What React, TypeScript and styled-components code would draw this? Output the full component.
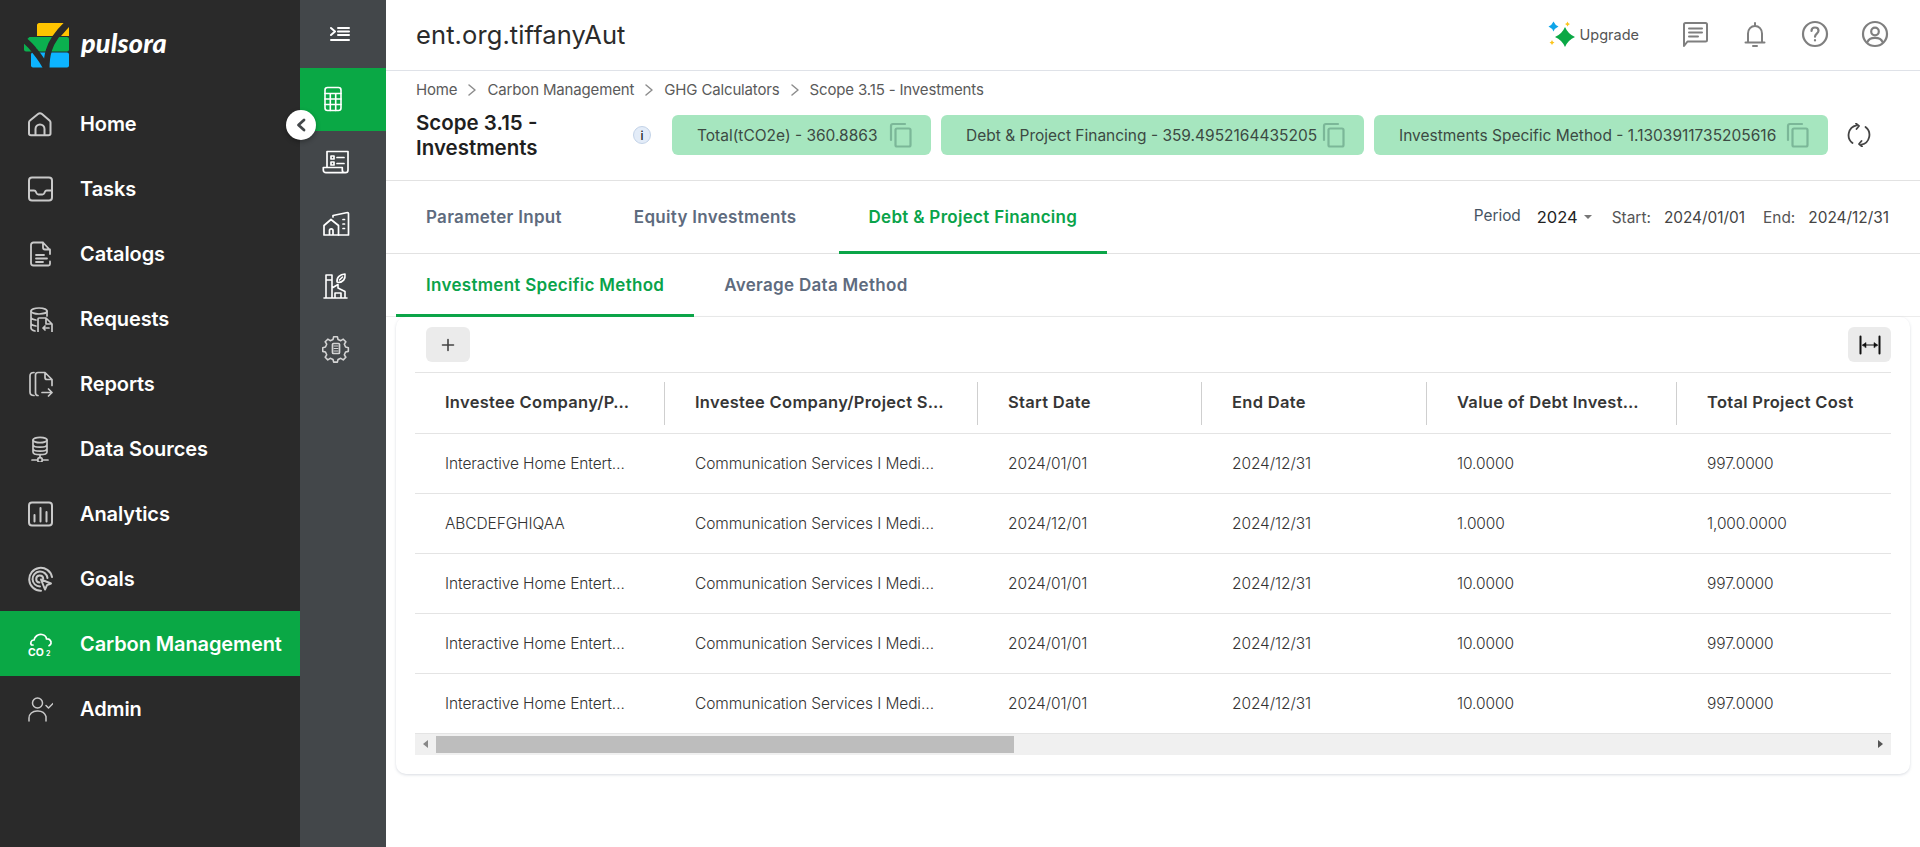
import React from "react";
import styled, { createGlobalStyle } from "styled-components";

const GREEN = "#0aa845";
const FONT = `Inter, "Noto Sans", "Liberation Sans", sans-serif`;

const Global = createGlobalStyle`
  html, body { margin: 0; padding: 0; height: 100%; background: #fff; overflow: hidden; }
  * { box-sizing: border-box; }
  body { font-family: ${FONT}; color: #333; }
`;

const Page = styled.div`
  position: relative;
  display: flex;
  width: 1920px;
  height: 847px;
  overflow: hidden;
`;

/* ---------- left sidebar ---------- */
const Sidebar = styled.aside`
  flex: 0 0 300px;
  background: #2a2a2a;
  display: flex;
  flex-direction: column;
`;
const Brand = styled.div`
  height: 91px;
  padding: 22px 0 0 24px;
  display: flex;
  align-items: flex-start;
  gap: 11px;
`;
const BrandName = styled.span`
  font-family: Lato, "Open Sans", sans-serif;
  font-style: italic;
  font-weight: 900;
  font-size: 27px;
  line-height: 1;
  color: #fff;
  margin-top: 7px;
  letter-spacing: 0.2px;
`;
const NavList = styled.nav`
  display: flex;
  flex-direction: column;
`;
const NavRow = styled.div<{ $active?: boolean }>`
  height: 65px;
  display: flex;
  align-items: center;
  gap: 27px;
  padding-left: 27px;
  background: ${(p) => (p.$active ? GREEN : "transparent")};
  color: ${(p) => (p.$active ? "#fff" : "#c9c9c9")};
`;
const NavLabel = styled.span`
  font-size: 20px;
  font-weight: 600;
  color: #fff;
  letter-spacing: -0.1px;
  white-space: nowrap;
`;
const Svg = styled.svg`
  display: block;
  flex: none;
`;

/* ---------- icon rail ---------- */
const Rail = styled.div`
  flex: 0 0 86px;
  background: #43474a;
  display: flex;
  flex-direction: column;
  color: #fff;
`;
const RailToggle = styled.div`
  height: 68px;
  padding-left: 30px;
  display: flex;
  align-items: center;
`;
const RailItem = styled.div<{ $active?: boolean; $muted?: boolean }>`
  height: 62.5px;
  padding-left: 22px;
  display: flex;
  align-items: center;
  background: ${(p) => (p.$active ? GREEN : "transparent")};
  color: ${(p) => (p.$muted ? "#d4d4d4" : "#fff")};
`;
const CollapseBtn = styled.div`
  position: absolute;
  left: 286px;
  top: 110px;
  width: 30px;
  height: 30px;
  border-radius: 50%;
  background: #fff;
  box-shadow: 0 2px 5px rgba(0, 0, 0, 0.3);
  display: flex;
  align-items: center;
  justify-content: center;
  color: #43474a;
`;

/* ---------- main ---------- */
const Main = styled.main`
  flex: 1;
  min-width: 0;
  display: flex;
  flex-direction: column;
`;
const TopBar = styled.header`
  height: 71px;
  flex: none;
  border-bottom: 1px solid #dfe2e8;
  display: flex;
  align-items: center;
  justify-content: space-between;
  padding: 0 30px 2px 30px;
`;
const OrgName = styled.div`
  font-size: 25.5px;
  font-weight: 400;
  color: #2b2b2b;
  letter-spacing: 0.1px;
`;
const TopActions = styled.div`
  display: flex;
  align-items: center;
  color: #7f7f7f;
`;
const UpgradeLink = styled.div`
  display: flex;
  align-items: center;
  gap: 5px;
  font-size: 14.5px;
  color: #555;
  margin-right: 26px;
`;
const TopIcon = styled.div`
  width: 60px;
  display: flex;
  justify-content: center;
  &:last-child { width: 30px; margin-left: 15px; }
`;

const Crumbs = styled.div`
  height: 37px;
  flex: none;
  display: flex;
  align-items: center;
  padding-left: 30px;
  font-size: 15px;
  color: #5a5a5a;
  letter-spacing: -0.15px;
`;
const CrumbSep = styled.span`
  display: flex;
  margin: 0 8px;
  color: #8d8d8d;
`;
const SummaryRow = styled.div`
  height: 73px;
  flex: none;
  border-bottom: 1px solid #e2e2e2;
  display: flex;
  align-items: flex-start;
  padding: 2px 0 0 30px;
`;
const PageTitle = styled.h1`
  margin: 0;
  width: 217px;
  font-size: 20.5px;
  line-height: 25px;
  font-weight: 600;
  color: #1f1f1f;
`;
const InfoDot = styled.div`
  flex: none;
  width: 18px;
  height: 18px;
  margin: 16px 21px 0 0;
  border-radius: 50%;
  background: #e3ecf8;
  border: 1px solid #c3d3e8;
  font-size: 12px;
  font-weight: 500;
  color: #222;
  display: flex;
  align-items: center;
  justify-content: center;
`;
const Pills = styled.div`
  display: flex;
  gap: 10px;
  margin-top: 5px;
`;
const Pill = styled.div<{ $w: number }>`
  width: ${(p) => p.$w}px;
  height: 40px;
  background: #a6e6bf;
  border-radius: 6px;
  display: flex;
  align-items: center;
  justify-content: space-between;
  padding: 0 17px 0 25px;
  font-size: 15.5px;
  color: #3c4a43;
  white-space: nowrap;
  > svg { color: #7bb798; }
`;
const Refresh = styled.div`
  margin: 13px 0 0 19px;
  color: #444;
`;

const TabBar = styled.div`
  height: 73px;
  flex: none;
  border-bottom: 1px solid #e2e2e2;
  display: flex;
  justify-content: space-between;
  padding-left: 10px;
`;
const TabGroup = styled.div<{ $gap: number }>`
  display: flex;
  gap: ${(p) => p.$gap}px;
`;
const Tab = styled.div<{ $active?: boolean }>`
  padding: 1px 30px 0;
  display: flex;
  align-items: center;
  font-size: 17px;
  font-weight: 600;
  letter-spacing: 0.3px;
  white-space: nowrap;
  color: ${(p) => (p.$active ? "#0aa34a" : "#5e6b7e")};
  border-bottom: 3px solid ${(p) => (p.$active ? "#0ba548" : "transparent")};
  margin-bottom: -1px;
`;
const PeriodBar = styled.div`
  display: flex;
  align-items: center;
  padding-right: 31px;
  font-size: 15.4px;
  color: #444;
`;
const PeriodLabel = styled.span`
  color: #465463;
  margin: -3px 16px 0 0;
`;
const PeriodValue = styled.span`
  font-size: 16.5px;
  color: #222;
  margin-right: 6px;
`;
const Caret = styled.span`
  width: 0;
  height: 0;
  border-left: 4px solid transparent;
  border-right: 4px solid transparent;
  border-top: 4px solid #777;
  margin-right: 20px;
`;
const DateLabel = styled.span`
  color: #555;
  margin-right: 13px;
`;
const DateValue = styled.span<{ $mr?: number }>`
  color: #444;
  margin-right: ${(p) => p.$mr ?? 0}px;
`;
const SubTabBar = styled(TabBar)`
  height: 63px;
  justify-content: flex-start;
  border-bottom-color: #ececec;
`;

const Card = styled.section`
  flex: none;
  height: 457px;
  margin: 0 10px;
  background: #fff;
  border-radius: 10px;
  box-shadow: 0 1px 3px rgba(120, 130, 150, 0.28);
  padding: 10px 19px 0;
  display: flex;
  flex-direction: column;
`;
const Toolbar = styled.div`
  height: 45px;
  flex: none;
  display: flex;
  justify-content: space-between;
  align-items: flex-start;
  padding-left: 11px;
`;
const ToolBtn = styled.div<{ $w: number; $dark?: boolean }>`
  width: ${(p) => p.$w}px;
  height: 35px;
  border-radius: 6px;
  background: #ebebeb;
  color: ${(p) => (p.$dark ? "#111" : "#444")};
  display: flex;
  align-items: center;
  justify-content: center;
`;
const TableBox = styled.div`
  border-top: 1px solid #e4e4e4;
  overflow: hidden;
`;
const Row = styled.div<{ $head?: boolean }>`
  display: grid;
  grid-template-columns: 250px 313px 224px 225px 250px 214px;
  align-items: center;
  height: ${(p) => (p.$head ? 61 : 60)}px;
  border-bottom: 1px solid #e4e4e4;
`;
const HeadCell = styled.div`
  height: 43px;
  padding: 0 0 2px 30px;
  display: flex;
  align-items: center;
  border-right: 1px solid #cfcfcf;
  font-size: 16.5px;
  font-weight: 600;
  color: #363636;
  white-space: nowrap;
  letter-spacing: 0.3px;
  &:last-child { border-right: none; }
`;
const Cell = styled.div`
  padding-left: 30px;
  font-size: 15.5px;
  font-weight: 300;
  color: #333;
  white-space: nowrap;
  letter-spacing: -0.1px;
`;
const ScrollTrack = styled.div`
  height: 21px;
  background: #f0f0f0;
  display: flex;
  align-items: center;
  position: relative;
`;
const ScrollThumb = styled.div`
  position: absolute;
  left: 21px;
  top: 2px;
  width: 578px;
  height: 17px;
  background: #bdbdbd;
`;
const Arrow = styled.span<{ $dir: "left" | "right" }>`
  position: absolute;
  top: 6px;
  ${(p) => (p.$dir === "left" ? "left: 8px;" : "right: 8px;")}
  width: 0;
  height: 0;
  border-top: 4.5px solid transparent;
  border-bottom: 4.5px solid transparent;
  ${(p) => (p.$dir === "left" ? "border-right: 5px solid #888;" : "border-left: 5px solid #555;")}
`;

/* ---------- drawings ---------- */
type IP = { s?: number; h?: number; vb?: string; w?: number; children: React.ReactNode };
const Ico = ({ s = 26, h, vb, w = 1.7, children }: IP) => (
  <Svg
    width={s}
    height={h ?? s}
    viewBox={vb ?? `0 0 ${s} ${h ?? s}`}
    fill="none"
    stroke="currentColor"
    strokeWidth={w}
    strokeLinecap="round"
    strokeLinejoin="round"
  >
    {children}
  </Svg>
);

const Logo = () => (
  <Svg width="46" height="47" viewBox="0 0 46 47">
    <path d="M15 1h25c2 0 2 1 1 3l-8 10H13V3c0-1 1-2 2-2z" fill="#ffc400" />
    <path d="M37 14l8-9v9z" fill="#ffc400" />
    <rect x="0" y="15" width="45" height="14.5" rx="2" fill="#0bb04f" />
    <rect x="7" y="30.5" width="38" height="15" rx="2" fill="#0db4ff" />
    <path d="M0 14.500H6L0 20z" fill="#2a2a2a" />
    <path d="M-1 17C4 21 8 25 10 28C14 33 19 39 22 46" stroke="#2a2a2a" strokeWidth="6" fill="none" />
    <path d="M46 -1C36 8 28 18 25 28C23 34 22.500 41 22.500 47" stroke="#2a2a2a" strokeWidth="6" fill="none" />
  </Svg>
);

const navItems: [string, React.ReactNode][] = [
  ["Home", <Ico key="a" w={2}><path d="M2 22.500V11.500c0-.8.3-1.500 1-2l8-6.500c1.200-1 2.800-1 4 0l7.500 6.500c.6.5 1 1.200 1 2v11c0 1-.8 1.700-2 1.700H4c-1.200 0-2-.7-2-1.700z" /><path d="M8.500 24v-6a4.500 4.500 0 0 1 9 0v6" /></Ico>],
  ["Tasks", <Ico key="b" w={2}><rect x="2" y="1.500" width="23" height="23" rx="3" /><path d="M2 14.500h5c1 0 1.600.5 2 1.500l.4 1c.4 1 1.100 1.500 2 1.500h4c.9 0 1.600-.5 2-1.500l.4-1c.4-1 1-1.500 2-1.500H25" /></Ico>],
  ["Catalogs", <Ico key="c" w={1.800}><path d="M23 20.500V23c0 1-.6 1.500-1.500 1.500M21 24.500H6.500C5 24.500 4 23.500 4 22V4c0-1.500 1-2.500 2.500-2.500h9.500L23 9v4M16 1.500V6.500c0 1.200.8 2 2 2h5" /><path d="M9 14h8M9 17.500h11M9 21h7" /></Ico>],
  ["Requests", <Ico key="d"><ellipse cx="12" cy="5" rx="8" ry="3" /><path d="M4 5v17c0 1.500 2 2.500 4 3M20 5v5M4 11c0 1.500 2 2.500 5 3M4 17c0 1.500 2 2.500 5 3" /><path d="M11 13c0-.6.4-1 1-1h7l6 6v8c0 .6-.4 1-1 1H12c-.6 0-1-.4-1-1zM19 12v6h6M22 22h-6M18 20l-2 2 2 2" /></Ico>],
  ["Reports", <Ico key="e"><path d="M7 1.500C4 1.500 3 3 3 5v16c0 2 1 3.500 4 3.500" /><path d="M11 24.500c-1.500 0-2.500-1-2.500-2.500V4c0-1.500 1-2.500 2.500-2.500h7l7 7v6M18 1.500v5c0 1.200.8 2 2 2h5" /><path d="M15 21.500h10M21.500 18l3.500 3.500-3.500 3.500" /></Ico>],
  ["Data Sources", <Ico key="f"><ellipse cx="13" cy="4" rx="7" ry="2.700" /><path d="M6 4v12c0 1.500 3 2.700 7 2.700s7-1.200 7-2.700V4M6 8.500c0 1.500 3 2.700 7 2.700s7-1.200 7-2.700M6 12.500c0 1.500 3 2.700 7 2.700s7-1.200 7-2.700" /><path d="M13 19v2.500M5 24h5.500M15.500 24H21" /><circle cx="13" cy="24" r="2.300" /></Ico>],
  ["Analytics", <Ico key="g" w={2}><rect x="2" y="1.500" width="23" height="23" rx="3" /><path d="M7.500 14v6.500M13.500 7v13.500M19.500 11v9.500" /></Ico>],
  ["Goals", <Ico key="h" w={2}><path d="M14 24.800A11.500 11.500 0 1 1 25 11" /><path d="M13 20.500A7.500 7.500 0 1 1 20.500 12" /><path d="M12.500 16.500a3.500 3.500 0 1 1 3.700-3.800" /><path d="M14 13.500l10 4-4 1.700-2 4.300z" /></Ico>],
  ["Carbon Management", <Ico key="i"><path d="M6 14H4.500C3 12 4 9 7 9c.5-3 4-6.500 8-5.500 3 .7 4.500 3 4.500 4.500 3-.3 5 2 4.500 4.500-.2 1-1 1.700-2 2.200" /><text x="1" y="24.500" fontFamily="Inter, sans-serif" fontWeight="700" fontSize="10.500" fill="currentColor" stroke="none">CO</text><text x="19" y="25" fontFamily="Inter, sans-serif" fontWeight="700" fontSize="7" fill="currentColor" stroke="none">2</text></Ico>],
  ["Admin", <Ico key="j" w={1.500}><circle cx="10.500" cy="7" r="5" /><path d="M2 25v-3c0-4 3.500-7 8-7h1c4 0 7 2.500 8 5.500V25" /><path d="M19 9.500l2.500 2.500 4.500-4.500" /></Ico>],
];

const railIcons: React.ReactNode[] = [
  <Ico key="a" s={26} w={1.600}><rect x="3" y="1.500" width="16" height="23" rx="2.500" /><path d="M3 7.500h16M3 13h16M3 18.500h16M8.300 7.500v17M13.700 7.500v17" /></Ico>,
  <Ico key="b" s={28} w={1.700}><path d="M5 19V3.500h21V22c0 1.600-1 2.700-2.600 2.700H4c-1.600 0-2.700-1-2.700-2.700v-2.500h19V22c0 1.500 1 2.700 2.600 2.700" /><path d="M9 8h3v3H9zM9 14h3v3H9zM15 9.500h7M15 15.500h7" /></Ico>,
  <Ico key="c" s={28} w={1.700}><path d="M2 25V15.500L9 9.500l7.500 6V25zM7.500 25v-4.500c0-1 .8-1.700 1.700-1.700s1.800.7 1.800 1.700V25" /><path d="M11 7V5.500l14.500-3c.6 0 1 .4 1 1V25H16.500" /><path d="M21 9.500h1.500M21 14h1.500M21 18.500h1.500" /></Ico>,
  <Ico key="d" s={28} w={1.600}><path d="M2 25h23M4 25V2h6v23M4 7h6M10 15l6-3.500v3.500l7 3.500V25M13 25v-5h6v5" /><path d="M15 9c-.5-5 3-7.500 8-8 .7 5-2 8.500-7 8.500M17.500 7l3-3" /></Ico>,
  <Ico key="e" s={28} w={1.700}><path d="M12 1.800h4l.7 3 3 1.300 2.600-1.600 2.800 2.800-1.600 2.600 1.300 3 3 .7v4l-3 .7-1.300 3 1.600 2.600-2.800 2.800-2.600-1.600-3 1.300-.7 2.800h-4l-.7-2.800-3-1.300-2.600 1.600-2.800-2.800 1.600-2.600-1.300-3-3-.7v-4l3-.7 1.300-3-1.600-2.600 2.800-2.800 2.600 1.600 3-1.300z" transform="translate(0.500 0) scale(0.93)" /><rect x="10.500" y="8.500" width="7" height="10" rx="1" /><path d="M12 11h4M12 13.500h4M12 16h4" strokeWidth="1" /></Ico>,
];

const Sparkle = () => (
  <Svg width="27" height="27" viewBox="0 0 27 27">
    <path d="M17 6Q20 13 27 16Q20 19 17 26Q14 19 7 16Q14 13 17 6z" fill="#0aa845" />
    <path d="M5.500 .5Q7 4 10.500 5.500Q7 7 5.500 10.500Q4 7 .5 5.500Q4 4 5.500 .5z" fill="#0ea5e9" />
    <path d="M19.500 .5Q20 2.500 22 3Q20 3.500 19.500 5.500Q19 3.500 17 3Q19 2.500 19.500 .5zM4 19Q4.500 21 6.500 21.500Q4.500 22 4 24Q3.500 22 1.500 21.500Q3.500 21 4 19z" fill="#fcc419" />
  </Svg>
);

const CopyIcon = () => (
  <Ico s={26} w={2.200}>
    <path d="M3 18V4c0-1.200.8-2 2-2h12" />
    <rect x="7.500" y="6.500" width="15" height="18" rx="1.500" />
  </Ico>
);

const Chevron = () => (
  <CrumbSep>
    <Ico s={14} w={1.500}><path d="M4 2l6 5-6 5" /></Ico>
  </CrumbSep>
);

const rows = [
  ["Interactive Home Entert…", "Communication Services I Medi…", "2024/01/01", "2024/12/31", "10.0000", "997.0000"],
  ["ABCDEFGHIQAA", "Communication Services I Medi…", "2024/12/01", "2024/12/31", "1.0000", "1,000.0000"],
  ["Interactive Home Entert…", "Communication Services I Medi…", "2024/01/01", "2024/12/31", "10.0000", "997.0000"],
  ["Interactive Home Entert…", "Communication Services I Medi…", "2024/01/01", "2024/12/31", "10.0000", "997.0000"],
  ["Interactive Home Entert…", "Communication Services I Medi…", "2024/01/01", "2024/12/31", "10.0000", "997.0000"],
];
const heads = ["Investee Company/P…", "Investee Company/Project S…", "Start Date", "End Date", "Value of Debt Invest…", "Total Project Cost"];

export default function App() {
  return (
    <Page>
      <Global />
      <Sidebar>
        <Brand>
          <Logo />
          <BrandName>pulsora</BrandName>
        </Brand>
        <NavList>
          {navItems.map(([label, icon]) => (
            <NavRow key={label} $active={label === "Carbon Management"}>
              {icon}
              <NavLabel>{label}</NavLabel>
            </NavRow>
          ))}
        </NavList>
      </Sidebar>

      <Rail>
        <RailToggle>
          <Ico s={20} h={16} w={2}>
            <path d="M1 2l4 3.500L1 9M8 2h11M8 5.500h11M8 9h11M1 14h18" />
          </Ico>
        </RailToggle>
        {railIcons.map((icon, i) => (
          <RailItem key={i} $active={i === 0} $muted={i === 4}>{icon}</RailItem>
        ))}
      </Rail>

      <CollapseBtn>
        <Ico s={12} h={14} w={2.800}><path d="M9 2L3.500 7 9 12" /></Ico>
      </CollapseBtn>

      <Main>
        <TopBar>
          <OrgName>ent.org.tiffanyAut</OrgName>
          <TopActions>
            <UpgradeLink><Sparkle />Upgrade</UpgradeLink>
            <TopIcon>
              <Ico s={28} w={2}>
                <path d="M3 22V4.500C3 3.500 3.500 3 4.500 3h20c1 0 1.500.5 1.500 1.500V20c0 1-.5 1.500-1.500 1.500H6.500L3 26z" />
                <path d="M8 8.500h13M8 12.500h13M8 16.500h9" />
              </Ico>
            </TopIcon>
            <TopIcon>
              <Ico s={28} w={2}>
                <path d="M4.500 22.500h19M7 22.500v-9c0-4.200 3-7.500 7-7.500s7 3.300 7 7.500v9M14 3v3M12 26h4" />
              </Ico>
            </TopIcon>
            <TopIcon>
              <Ico s={28} w={2.200}>
                <circle cx="14" cy="14" r="12" />
                <path d="M10.500 11c0-2.200 1.500-3.500 3.500-3.500s3.500 1.300 3.500 3.200c0 2.800-3.500 3-3.500 6" />
                <path d="M14 20.200v.3" />
              </Ico>
            </TopIcon>
            <TopIcon>
              <Ico s={28} w={2.200}>
                <circle cx="14" cy="14" r="12" />
                <circle cx="14" cy="11.500" r="3.800" />
                <path d="M6.500 22c1-3 4-4.200 7.500-4.200s6.500 1.200 7.500 4.200" />
              </Ico>
            </TopIcon>
          </TopActions>
        </TopBar>

        <Crumbs>
          Home<Chevron />Carbon Management<Chevron />GHG Calculators<Chevron />Scope 3.15 - Investments
        </Crumbs>

        <SummaryRow>
          <PageTitle>Scope 3.15 - Investments</PageTitle>
          <InfoDot>i</InfoDot>
          <Pills>
            <Pill $w={259}>Total(tCO2e) - 360.8863<CopyIcon /></Pill>
            <Pill $w={423}>Debt &amp; Project Financing - 359.4952164435205<CopyIcon /></Pill>
            <Pill $w={454}>Investments Specific Method - 1.1303911735205616<CopyIcon /></Pill>
          </Pills>
          <Refresh>
            <Ico s={24} w={1.800}>
              <path d="M5.500 20A10 10 0 0 1 9.500 2.300M18.500 4A10 10 0 0 1 14.500 21.700" />
              <path d="M9 .5l3 2.500-2.500 3M15 23.500l-3-2.500 2.500-3" />
            </Ico>
          </Refresh>
        </SummaryRow>

        <TabBar>
          <TabGroup $gap={12}>
            <Tab>Parameter Input</Tab>
            <Tab>Equity Investments</Tab>
            <Tab $active>Debt &amp; Project Financing</Tab>
          </TabGroup>
          <PeriodBar>
            <PeriodLabel>Period</PeriodLabel>
            <PeriodValue>2024</PeriodValue>
            <Caret />
            <DateLabel>Start:</DateLabel>
            <DateValue $mr={18}>2024/01/01</DateValue>
            <DateLabel>End:</DateLabel>
            <DateValue>2024/12/31</DateValue>
          </PeriodBar>
        </TabBar>

        <SubTabBar>
          <TabGroup $gap={0}>
            <Tab $active>Investment Specific Method</Tab>
            <Tab>Average Data Method</Tab>
          </TabGroup>
        </SubTabBar>

        <Card>
          <Toolbar>
            <ToolBtn $w={44}>
              <Ico s={14} w={1.600}><path d="M7 1.500v11M1.500 7h11" /></Ico>
            </ToolBtn>
            <ToolBtn $w={43} $dark>
              <Ico s={24} w={2}>
                <path d="M2.500 3.500v17M21.500 3.500v17" />
                <path d="M5 12h14" strokeWidth={1.200} />
                <path d="M4.500 12l3.500-2.500v5zM19.500 12L16 9.500v5z" fill="currentColor" strokeWidth={0.500} />
              </Ico>
            </ToolBtn>
          </Toolbar>
          <TableBox>
            <Row $head>
              {heads.map((h) => <HeadCell key={h}>{h}</HeadCell>)}
            </Row>
            {rows.map((r, i) => (
              <Row key={i}>
                {r.map((c, j) => <Cell key={j}>{c}</Cell>)}
              </Row>
            ))}
          </TableBox>
          <ScrollTrack>
            <Arrow $dir="left" />
            <ScrollThumb />
            <Arrow $dir="right" />
          </ScrollTrack>
        </Card>
      </Main>
    </Page>
  );
}
